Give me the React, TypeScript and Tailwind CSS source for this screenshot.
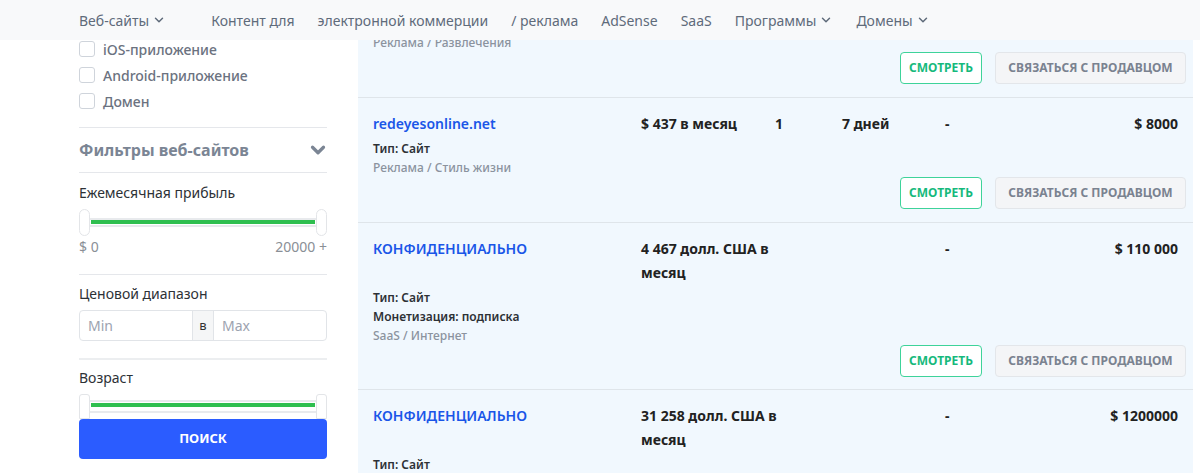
import { ChevronDown } from 'lucide-react';

const nav = [
  { label: 'Контент для' },
  { label: 'электронной коммерции' },
  { label: '/ реклама' },
  { label: 'AdSense' },
  { label: 'SaaS' },
  { label: 'Программы', caret: true },
  { label: 'Домены', caret: true },
];

function Header() {
  return (
    <div className="absolute inset-x-0 top-0 z-10 flex h-[40px] items-center bg-[#f8f9fa] pl-[79px] text-[14px] text-[#5f6b7a]">
      <span className="flex items-center gap-[3px]">
        Веб-сайты
        <ChevronDown size={14} strokeWidth={2.5} />
      </span>
      <div className="ml-[45px] flex items-center gap-[23px]">
        {nav.map((item) => (
          <span key={item.label} className="flex items-center gap-[3px]">
            {item.label}
            {item.caret ? <ChevronDown size={14} strokeWidth={2.5} /> : null}
          </span>
        ))}
      </div>
    </div>
  );
}

function RangeSlider({ short }: { short?: boolean }) {
  return (
    <div className={`relative ${short ? 'h-[25px]' : 'h-[27px]'}`}>
      <div className={`absolute left-[11px] right-[11px] ${short ? 'top-[6px] h-[13px]' : 'top-[9px] h-[9px]'} border-y-2 border-[#e8eaed] bg-white`}>
        <div className={`mx-[1px] ${short ? 'mt-[1px] h-[4px]' : 'mt-0 h-[4px]'} bg-[#2fbf4f]`} />
      </div>
      <div className={`absolute left-0 top-0 w-[11px] ${short ? 'h-[25px] rounded-t-[3px]' : 'h-[27px] rounded-[6px]'} border border-[#e3e5e8] bg-white`} />
      <div className={`absolute right-0 top-0 w-[11px] ${short ? 'h-[25px] rounded-t-[3px]' : 'h-[27px] rounded-[6px]'} border border-[#e3e5e8] bg-white`} />
    </div>
  );
}

function Sidebar() {
  const checks = ['iOS-приложение', 'Android-приложение', 'Домен'];
  return (
    <div className="w-[358px] shrink-0 bg-white pl-[79px] pr-[31px] pt-[36px]">
      {checks.map((c) => (
        <label key={c} className="flex h-[26px] items-center gap-[8px] text-[14px] font-medium text-[#6b7280]">
          <span className="h-[16px] w-[16px] rounded-[3px] border border-[#cfd4db] bg-white" />
          {c}
        </label>
      ))}
      <div className="mt-[13px] border-t border-[#e5e7eb]" />
      <div className="flex h-[44px] items-center justify-between">
        <span className="text-[16px] font-bold text-[#7b8594]">Фильтры веб-сайтов</span>
        <ChevronDown size={22} strokeWidth={3.5} className="-mr-[2px] text-[#7b8594]" />
      </div>
      <div className="border-t border-[#e5e7eb]" />
      <p className="mt-[10px] text-[14px] leading-[20px] text-[#2d3136]">Ежемесячная прибыль</p>
      <div className="mt-[6px]">
        <RangeSlider />
      </div>
      <div className="mt-[1px] flex justify-between text-[14px] leading-[20px] text-[#8a8f96]">
        <span>$ 0</span>
        <span>20000 +</span>
      </div>
      <div className="mt-[17px] border-t border-[#e5e7eb]" />
      <p className="mt-[9px] text-[14px] leading-[20px] text-[#2d3136]">Ценовой диапазон</p>
      <div className="mt-[6px] flex h-[31px] overflow-hidden rounded-[4px] border border-[#e1e4e8] text-[14px]">
        <div className="flex w-[112px] items-center px-[8px] text-[#9ca3af]">Min</div>
        <div className="flex w-[22px] items-center justify-center border-x border-[#e1e4e8] bg-[#f5f6f7] text-[13px] text-[#333]">в</div>
        <div className="flex flex-1 items-center px-[8px] text-[#9ca3af]">Max</div>
      </div>
      <div className="mt-[17px] border-t-2 border-[#eceef0]" />
      <p className="mt-[8px] text-[14px] leading-[20px] text-[#2d3136]">Возраст</p>
      <div className="mt-[6px]">
        <RangeSlider short />
      </div>
      <button className="relative flex h-[40px] w-full items-center justify-center rounded-[4px] bg-[#2b5cff] text-[13px] font-bold uppercase text-white">
        поиск
      </button>
    </div>
  );
}

interface Listing {
  title: string;
  price: string;
  wide?: boolean;
  traffic?: string;
  age?: string;
  asking: string;
  meta: string[];
  category?: string;
  partial?: boolean;
}

const listings: Listing[] = [
  { title: 'redeyesonline.net', price: '$ 437 в месяц', traffic: '1', age: '7 дней', asking: '$ 8000', meta: ['Тип: Сайт'], category: 'Реклама / Стиль жизни' },
  { title: 'КОНФИДЕНЦИАЛЬНО', price: '4 467 долл. США в месяц', wide: true, asking: '$ 110 000', meta: ['Тип: Сайт', 'Монетизация: подписка'], category: 'SaaS / Интернет' },
  { title: 'КОНФИДЕНЦИАЛЬНО', price: '31 258 долл. США в месяц', wide: true, asking: '$ 1200000', meta: ['Тип: Сайт'], partial: true },
];

function Actions() {
  return (
    <div className="-mr-[8px] flex justify-end gap-[13px]">
      <button className="flex h-[32px] w-[82px] items-center justify-center rounded-[4px] border border-[#3ed39a] bg-white text-[12px] font-bold uppercase text-[#16b97c]">
        Смотреть
      </button>
      <button className="flex h-[32px] w-[191px] items-center justify-center rounded-[4px] border border-[#e3e6ea] bg-[#f4f5f7] text-[12px] font-bold uppercase text-[#7a8290]">
        Связаться с продавцом
      </button>
    </div>
  );
}

function ListingRow({ item }: { item: Listing }) {
  return (
    <div className={`border-b border-[#dfe5ea] pl-[15px] pr-[15px] pt-[14px] ${item.wide ? 'pb-[12px]' : 'pb-[13px]'}`}>
      <div className="grid grid-cols-[268px_134px_67px_103px_1fr_auto] text-[14px] font-bold leading-[24px] text-[#222]">
        <span className="text-[14px] font-semibold text-[#1a56e8]">{item.title}</span>
        {item.wide ? (
          <span className="col-span-3 max-w-[170px]">{item.price}</span>
        ) : (
          <>
            <span>{item.price}</span>
            <span>{item.traffic}</span>
            <span>{item.age}</span>
          </>
        )}
        <span>-</span>
        <span className="text-right">{item.asking}</span>
      </div>
      <div className={`${item.wide ? 'mt-[3px]' : 'mt-[3px]'} text-[12px] leading-[19px]`}>
        {item.meta.map((m) => (
          <p key={m} className="font-semibold text-[#2d3136]">{m}</p>
        ))}
        {item.category ? <p className="font-medium text-[#8b939e]">{item.category}</p> : null}
      </div>
      {item.partial ? null : <Actions />}
    </div>
  );
}

export default function App() {
  return (
    <div className="relative h-[473px] w-[1200px] overflow-hidden bg-white" style={{ fontFamily: '"Noto Sans", "Open Sans", sans-serif' }}>
      <Header />
      <div className="flex">
        <Sidebar />
        <div className="h-[473px] w-[835px] shrink-0 overflow-hidden bg-[#f1f8fe]">
          <div className="border-b border-[#dfe5ea] pl-[15px] pr-[15px] pb-[13px] pt-[33px]">
            <p className="text-[12px] font-medium leading-[19px] text-[#8b939e]">Реклама / Развлечения</p>
            <Actions />
          </div>
          {listings.map((l, i) => (
            <ListingRow key={i} item={l} />
          ))}
        </div>
      </div>
    </div>
  );
}
